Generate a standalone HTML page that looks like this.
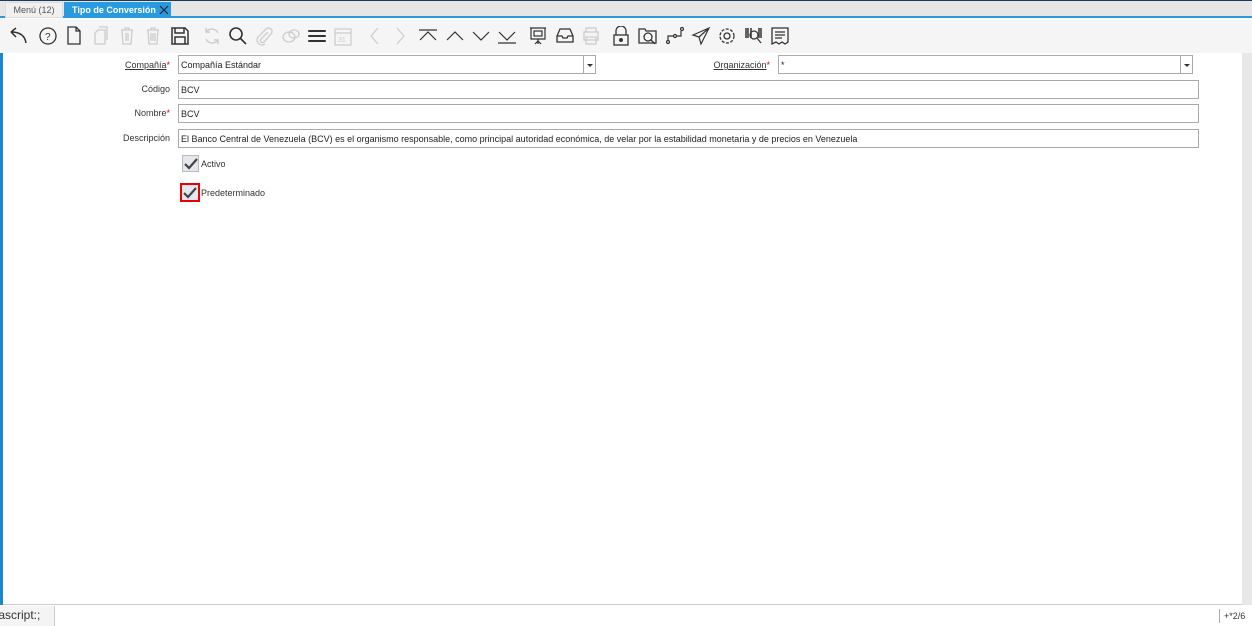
<!DOCTYPE html>
<html><head><meta charset="utf-8"><style>
*{box-sizing:border-box;margin:0;padding:0}
body{width:1252px;height:626px;overflow:hidden;background:#fff;font-family:"Liberation Sans",sans-serif;font-size:9px;color:#333;position:relative}
.top{position:absolute;left:0;top:0;width:1252px;height:1px;background:#1a3a5a}
.tabbar{position:absolute;left:0;top:1px;width:1252px;height:17px;background:#e6e6e6;border-bottom:2px solid #2a9ae0}
.tab{position:absolute;top:1px;height:16px;line-height:16px;font-size:9px;white-space:nowrap}
.t1{left:5px;width:58px;background:#f0f0f0;color:#555;border:1px solid #ddd;text-align:center;line-height:14px}
.t2{left:64px;width:107px;background:#2a9ae0;color:#fff;padding-left:8px}
.toolbar{position:absolute;left:0;top:19px;width:1252px;height:34px;background:#f5f5f5}
.toolbar svg{position:absolute;top:7px}
.content{position:absolute;left:3px;top:53px;width:1239px;height:552px;background:#fff;border-bottom:1px solid #ccc}
.lb{position:absolute;left:0;top:53px;width:3px;height:552px;background:#1a88d0}
.sb{position:absolute;left:1242px;top:53px;width:10px;height:552px;background:#e8e8e8}
.lbl{position:absolute;font-size:9px;color:#333;text-align:right}
.inp{position:absolute;height:19px;border:1px solid #aaa;background:#fff;font-size:9px;line-height:18px;padding-left:2px;color:#222;white-space:nowrap;overflow:hidden}
.req{color:#d00}
.dd{position:absolute;width:13px;height:19px;border:1px solid #aaa;background:#fff}
.dd:after{content:"";position:absolute;left:3px;top:8px;border-left:3px solid transparent;border-right:3px solid transparent;border-top:3px solid #333}
.cb{position:absolute;width:17px;height:17px;background:#e4e8ee;border:1px solid #bbb}
.status{position:absolute;left:0;top:606px;width:1252px;height:20px;background:#fff;font-size:12px}
</style></head><body>
<div class="top"></div>
<div class="tabbar">
<div class="tab t1">Menú (12)</div>
<div class="tab t2"><b style="font-weight:bold">Tipo de Conversión</b><svg style="position:absolute;right:2px;top:3px" width="10" height="10"><path d="M1 1L9 9M9 1L1 9" stroke="#222" stroke-width="1.2"/></svg></div>
</div>
<div class="toolbar">
<svg style="left:8px" width="20" height="20" fill="none" stroke="#333" stroke-width="1.5"><path d="M3 6L8 2M3 6L8 11M3 6C12 6 17 10 18 17"/></svg>
<svg style="left:38px" width="20" height="20" fill="none" stroke="#333" stroke-width="1.3"><circle cx="10" cy="10" r="8"/><text x="7" y="14" font-size="10" fill="#333" stroke="none" font-family="Liberation Sans">?</text></svg>
<svg style="left:66px" width="16" height="20" fill="none" stroke="#333" stroke-width="1.3"><path d="M2 1H10L14 5V18H2Z M10 1V5H14"/></svg>
<svg style="left:93px" width="16" height="20" fill="none" stroke="#ccc" stroke-width="1.3"><path d="M5 4H12V18H2V7Z M6 1H14V14"/></svg>
<svg style="left:119px" width="16" height="20" fill="none" stroke="#ccc" stroke-width="1.3"><path d="M2 4H14M6 4V2H10V4M3 4L4 18H12L13 4M7 7V15M9 7V15"/></svg>
<svg style="left:145px" width="16" height="20" fill="none" stroke="#ccc" stroke-width="1.3"><path d="M2 4H14M6 4V2H10V4M3 4L4 18H12L13 4M6 7V15M8 7V15M10 7V15"/></svg>
<svg style="left:171px" width="18" height="20" fill="none" stroke="#333" stroke-width="1.5"><path d="M1 2H14L17 5V18H1Z M4 2V7H13V2 M4 11H14V18H4Z"/></svg>
<svg style="left:202px" width="20" height="20" fill="none" stroke="#ccc" stroke-width="1.4"><path d="M16 7A7 7 0 0 0 4 6M4 13A7 7 0 0 0 16 14M4 2V6H8M16 18V14H12"/></svg>
<svg style="left:228px" width="20" height="20" fill="none" stroke="#333" stroke-width="1.6"><circle cx="8" cy="8" r="6"/><path d="M12.5 12.5L18 18"/></svg>
<svg style="left:254px" width="20" height="20" fill="none" stroke="#ccc" stroke-width="1.3"><path d="M14 6L7 13A2 2 0 0 0 10 16L17 8A3.5 3.5 0 0 0 12 3L4 11A5 5 0 0 0 11 18"/></svg>
<svg style="left:281px" width="20" height="20" fill="none" stroke="#ccc" stroke-width="1.3"><ellipse cx="8" cy="11" rx="6" ry="5"/><ellipse cx="13" cy="8" rx="5" ry="4"/></svg>
<svg style="left:307px" width="20" height="20" fill="none" stroke="#333" stroke-width="2"><path d="M2 5H18M2 10H18M2 15H18" stroke-linecap="round"/></svg>
<svg style="left:334px" width="18" height="20" fill="none" stroke="#ccc" stroke-width="1.2"><rect x="1" y="3" width="16" height="16"/><path d="M1 7H17"/><text x="4" y="16" font-size="7" fill="#ccc" stroke="none">31</text></svg>
<svg style="left:368px" width="14" height="20" fill="none" stroke="#ccc" stroke-width="1.2"><path d="M10 2L3 10L10 18"/></svg>
<svg style="left:393px" width="14" height="20" fill="none" stroke="#ccc" stroke-width="1.2"><path d="M4 2L11 10L4 18"/></svg>
<svg style="left:418px" width="20" height="20" fill="none" stroke="#333" stroke-width="1.2"><path d="M1 4H19M2 14L10 6L18 14"/></svg>
<svg style="left:445px" width="20" height="20" fill="none" stroke="#333" stroke-width="1.2"><path d="M2 14L10 6L18 14"/></svg>
<svg style="left:471px" width="20" height="20" fill="none" stroke="#333" stroke-width="1.2"><path d="M2 6L10 14L18 6"/></svg>
<svg style="left:497px" width="20" height="20" fill="none" stroke="#333" stroke-width="1.2"><path d="M2 6L10 14L18 6M1 17H19"/></svg>
<svg style="left:529px" width="18" height="20" fill="none" stroke="#333" stroke-width="1.2"><path d="M1 2H17M2 2V13H16V2M9 13V18M6 18L9 15L12 18"/><rect x="5" y="5" width="8" height="5"/></svg>
<svg style="left:555px" width="20" height="20" fill="none" stroke="#333" stroke-width="1.3"><path d="M2 10L5 3H15L18 10V16H2Z M2 10H7L8 12H12L13 10H18"/></svg>
<svg style="left:582px" width="18" height="20" fill="none" stroke="#ccc" stroke-width="1.3"><path d="M4 6V2H14V6M2 6H16V14H2Z M4 11H14V18H4Z"/></svg>
<svg style="left:612px" width="18" height="20" fill="none" stroke="#333" stroke-width="1.3"><path d="M4 9V5A5 5 0 0 1 14 5V9"/><rect x="2" y="9" width="14" height="10"/><circle cx="9" cy="14" r="1.3" fill="#333"/></svg>
<svg style="left:638px" width="20" height="20" fill="none" stroke="#333" stroke-width="1.3"><path d="M1 3H7L8 5H18V17H1Z"/><circle cx="10" cy="11" r="4"/><path d="M13 14L17 18"/></svg>
<svg style="left:665px" width="20" height="20" fill="none" stroke="#333" stroke-width="1.2"><circle cx="3" cy="16" r="1.5"/><circle cx="10" cy="10" r="1.5"/><circle cx="17" cy="3" r="1.5"/><path d="M3 14V10H8M12 10H16V5"/></svg>
<svg style="left:691px" width="20" height="20" fill="none" stroke="#333" stroke-width="1.2"><path d="M18 2L2 9L8 11L10 18Z M18 2L8 11"/></svg>
<svg style="left:717px" width="20" height="20" fill="none" stroke="#333" stroke-width="1.3"><circle cx="10" cy="10" r="3"/><circle cx="10" cy="10" r="7" stroke-dasharray="3 1.5"/></svg>
<svg style="left:744px" width="20" height="20" fill="none" stroke="#333" stroke-width="1.2"><path d="M2 2V12M4 2V12M7 2V12M15 2V12M17 2V12" stroke-width="1.5"/><circle cx="10" cy="9" r="4"/><path d="M13 12L17 17"/></svg>
<svg style="left:770px" width="20" height="20" fill="none" stroke="#333" stroke-width="1.3"><path d="M2 2H18V16L15 18L12 16L9 18L6 16L2 18Z M5 6H15M5 9H15M5 12H12"/></svg>
</div>
<div class="lb"></div>
<div class="content"></div>
<div class="sb"></div>

<div class="lbl" style="left:100px;top:60px;width:70px"><u>Compañía</u><span class="req">*</span></div>
<div class="inp" style="left:178px;top:55px;width:406px">Compañía Estándar</div>
<div class="dd" style="left:583px;top:55px"></div>
<div class="lbl" style="left:690px;top:60px;width:80px"><u>Organización</u><span class="req">*</span></div>
<div class="inp" style="left:778px;top:55px;width:403px">*</div>
<div class="dd" style="left:1180px;top:55px"></div>

<div class="lbl" style="left:100px;top:84px;width:70px">Código</div>
<div class="inp" style="left:178px;top:80px;width:1021px">BCV</div>
<div class="lbl" style="left:100px;top:108px;width:70px">Nombre<span class="req">*</span></div>
<div class="inp" style="left:178px;top:104px;width:1021px">BCV</div>
<div class="lbl" style="left:90px;top:133px;width:80px">Descripción</div>
<div class="inp" style="left:178px;top:129px;width:1021px">El Banco Central de Venezuela (BCV) es el organismo responsable, como principal autoridad económica, de velar por la estabilidad monetaria y de precios en Venezuela</div>

<div class="cb" style="left:182px;top:155px"><svg width="17" height="17" style="position:absolute;left:0;top:0"><path d="M2 8L6 12L14 3" fill="none" stroke="#444" stroke-width="2.2"/></svg></div>
<div style="position:absolute;left:201px;top:159px">Activo</div>
<div class="cb" style="left:180px;top:183px;border:2px solid #e00;width:20px;height:19px"><svg width="17" height="17" style="position:absolute;left:0;top:0"><path d="M2 8L6 12L14 3" fill="none" stroke="#444" stroke-width="2.2"/></svg></div>
<div style="position:absolute;left:201px;top:188px">Predeterminado</div>

<div class="status">
<div style="position:absolute;left:0;top:0;height:20px;width:55px;background:#f4f4f4;border-right:1px solid #ccc;line-height:18px;overflow:hidden;white-space:nowrap"><span style="position:absolute;left:-17px">javascript:;</span></div>
<div style="position:absolute;left:1219px;top:3px;height:14px;border-left:1px solid #aaa;padding-left:4px;font-size:9px;line-height:14px">+*2/6</div>
</div>
</body></html>
